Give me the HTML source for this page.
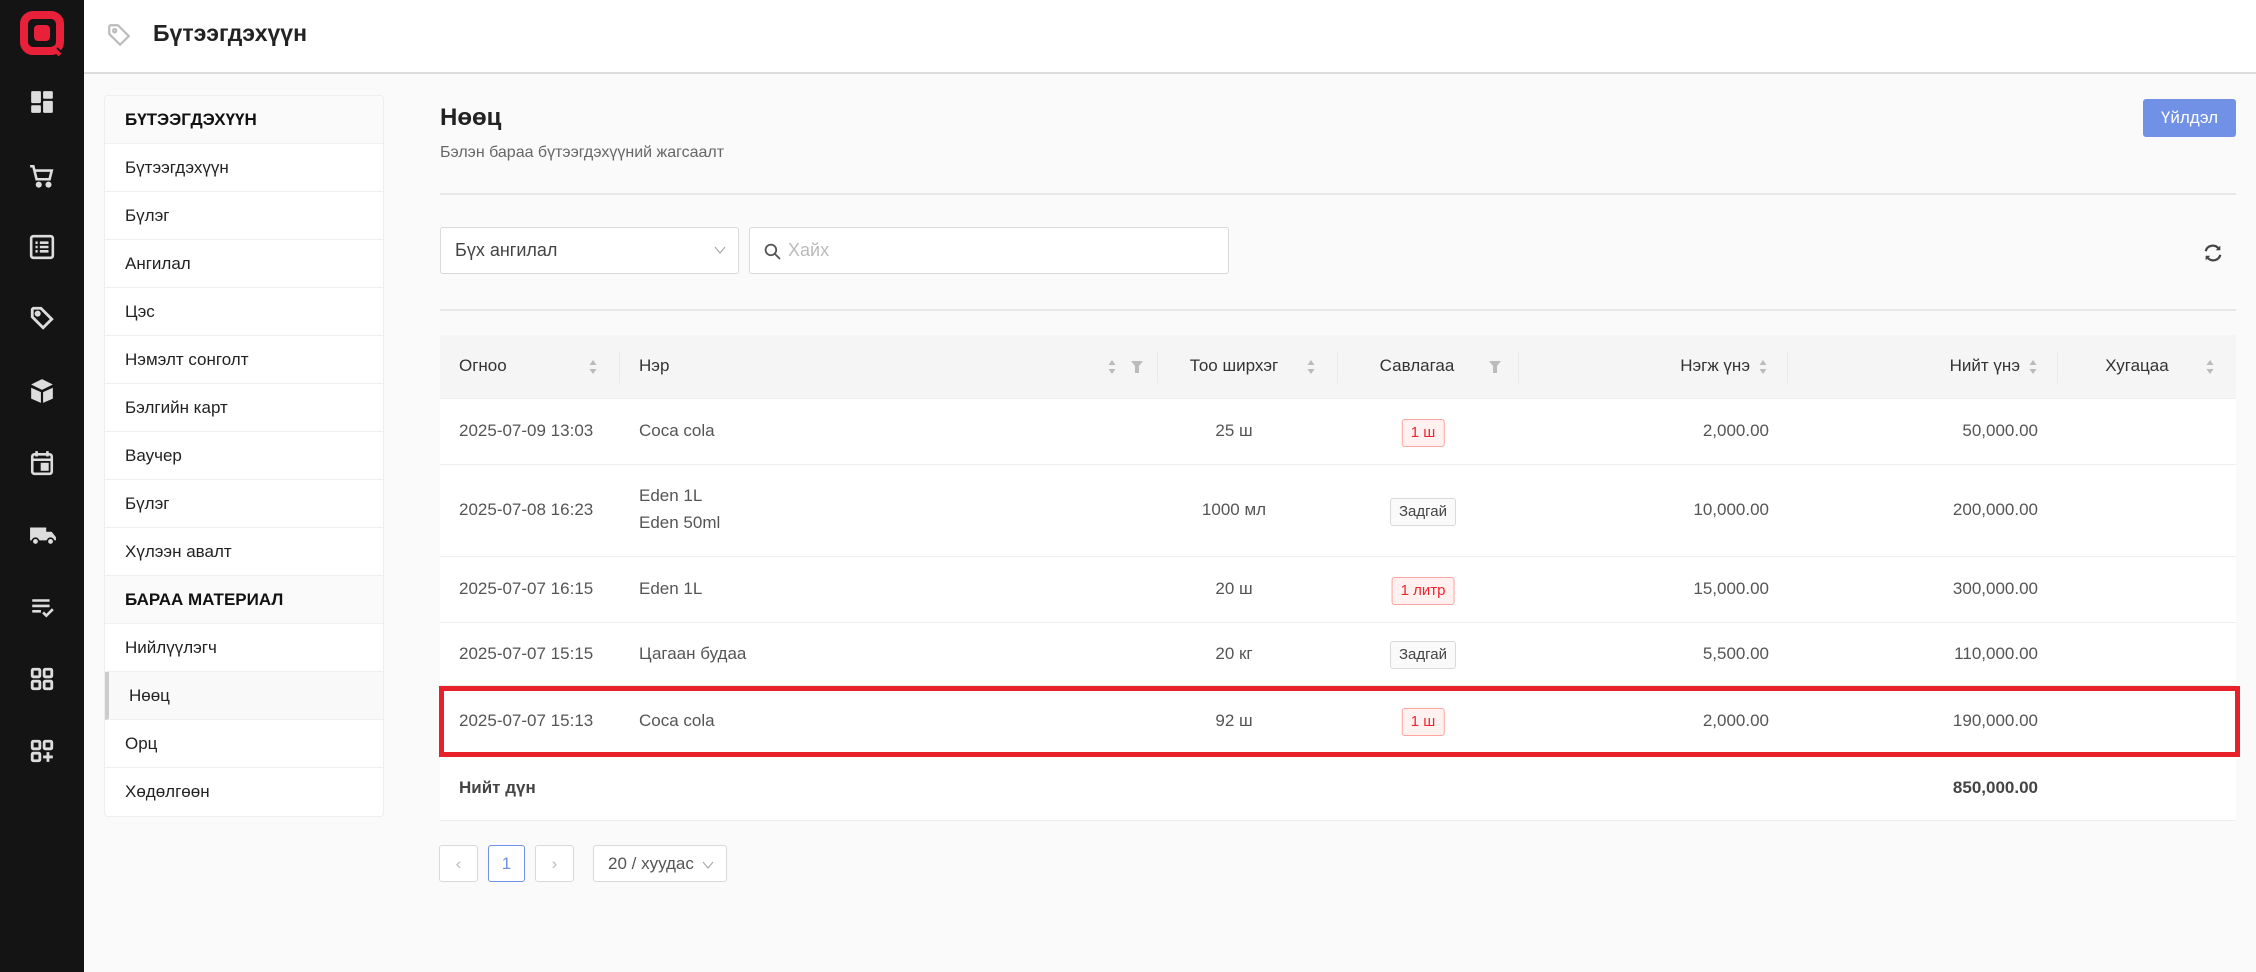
<!DOCTYPE html>
<html><head><meta charset="utf-8"><style>
*{box-sizing:border-box;margin:0;padding:0}
body{width:2256px;height:972px;overflow:hidden;background:#fafafa;font-family:"Liberation Sans",Arial,sans-serif;color:#333;position:relative}
.abs{position:absolute}
#side{left:0;top:0;width:84px;height:972px;background:#141414}
#side svg{position:absolute;left:29px}
#top{left:84px;top:0;width:2172px;height:74px;background:#fff;border-bottom:2px solid #ddd}
#menu{left:104px;top:95px;width:280px;background:#fff;border:1px solid #eee;border-radius:4px;overflow:hidden}
#menu div{height:48px;line-height:48px;padding-left:20px;font-size:17px;color:#222;border-bottom:1px solid #f0f0f0}
#menu div.h{background:#fafafa;font-weight:bold;color:#111}
#menu div.s{background:#f9f9f9;border-left:4px solid #ccc;padding-left:20px}
.tbl{left:440px;width:1796px}
.row{position:absolute;left:0;width:1796px;background:#fff;border-bottom:1.5px solid #eee}
.c{position:absolute;font-size:17px;color:#555;white-space:nowrap}
.tag{position:absolute;height:28px;line-height:26px;font-size:15px;padding:0 8px;border-radius:3px;transform:translateX(-50%)}
.red{background:#fff1f0;border:1px solid #ffa39e;color:#f5222d}
.gray{background:#fafafa;border:1px solid #d9d9d9;color:#444}
.hd{position:absolute;font-size:17px;color:#333}
.dv{position:absolute;top:16px;width:1px;height:32px;background:#eaeaea}
.sort{position:absolute;width:8px;height:16px}
.pb{position:absolute;top:845px;height:37px;border:1px solid #d9d9d9;border-radius:3px;background:#fff;font-size:17px;color:#bbb;text-align:center;line-height:35px}
</style></head><body>
<div id="side" class="abs">
<svg style="left:18px;top:9px" width="48" height="48" viewBox="0 0 48 48"><rect x="6" y="6" width="36" height="36" rx="9" fill="none" stroke="#e8203a" stroke-width="8"/><rect x="16" y="16" width="16" height="16" rx="4" fill="#e8203a"/><path d="M38 40l8 8" stroke="#141414" stroke-width="5"/><path d="M34 38l8 8" stroke="#e8203a" stroke-width="4"/></svg>
<svg style="top:89px" width="26" height="26" viewBox="0 0 24 24" fill="#ddd"><rect x="2" y="2" width="9" height="11" rx="1"/><rect x="13" y="2" width="9" height="7" rx="1"/><rect x="2" y="15" width="9" height="7" rx="1"/><rect x="13" y="11" width="9" height="11" rx="1"/></svg>
<svg style="top:163px" width="26" height="26" viewBox="0 0 24 24" fill="none" stroke="#ddd" stroke-width="2.4"><path d="M1 3h3l3 12h12l2-8H6"/><circle cx="9" cy="20" r="1.6" fill="#ddd"/><circle cx="18" cy="20" r="1.6" fill="#ddd"/></svg>
<svg style="top:234px" width="26" height="26" viewBox="0 0 24 24" fill="none" stroke="#ddd" stroke-width="2.4"><rect x="2" y="2" width="20" height="20" rx="2"/><path d="M6 8h2M10 8h8M6 12h2M10 12h8M6 16h2M10 16h8"/></svg>
<svg style="top:305px" width="26" height="26" viewBox="0 0 24 24" fill="none" stroke="#ddd" stroke-width="2.6"><path d="M3 4v7l10 10 8-8L11 3H4z"/><circle cx="8" cy="8" r="1.5"/></svg>
<svg style="top:378px" width="26" height="26" viewBox="0 0 24 24" fill="#ddd"><path d="M12 1l10 5-10 5L2 6z"/><path d="M2 9l9 4v10l-9-4zM13 13l9-4v10l-9 4z"/></svg>
<svg style="top:450px" width="26" height="26" viewBox="0 0 24 24" fill="none" stroke="#ddd" stroke-width="2.4"><rect x="3" y="4" width="18" height="18" rx="2"/><path d="M7 1v5M17 1v5M3 9h18"/><rect x="12" y="13" width="5" height="5" fill="#ddd"/></svg>
<svg style="top:522px" width="28" height="26" viewBox="0 0 26 24" fill="#ddd"><path d="M1 5h15v12H1zM16 9h5l4 5v3h-9z"/><circle cx="6" cy="18" r="3" fill="#ddd" stroke="#141414" stroke-width="1.5"/><circle cx="20" cy="18" r="3" fill="#ddd" stroke="#141414" stroke-width="1.5"/></svg>
<svg style="top:594px" width="26" height="26" viewBox="0 0 24 24" fill="none" stroke="#ddd" stroke-width="2.4"><path d="M3 6h16M3 11h16M3 16h8M13 17l3 3 6-6"/></svg>
<svg style="top:666px" width="26" height="26" viewBox="0 0 24 24" fill="none" stroke="#ddd" stroke-width="2.6"><rect x="3" y="3" width="7" height="7" rx="1"/><rect x="14" y="3" width="7" height="7" rx="1"/><rect x="3" y="14" width="7" height="7" rx="1"/><rect x="14" y="14" width="7" height="7" rx="1"/></svg>
<svg style="top:738px" width="26" height="26" viewBox="0 0 24 24" fill="none" stroke="#ddd" stroke-width="2.6"><rect x="3" y="3" width="7" height="7" rx="1"/><rect x="14" y="3" width="7" height="7" rx="1"/><rect x="3" y="14" width="7" height="7" rx="1"/><path d="M17.5 13v9M13 17.5h9"/></svg>
</div>
<div id="top" class="abs">
<svg class="abs" style="left:22px;top:22px" width="26" height="26" viewBox="0 0 24 24" fill="none" stroke="#bbb" stroke-width="2"><path d="M3 4v7l10 10 8-8L11 3H4z"/><circle cx="8" cy="8" r="1.5"/></svg>
<div class="abs" style="left:69px;top:20px;font-size:23px;font-weight:bold;color:#222">Бүтээгдэхүүн</div>
</div>
<div id="menu" class="abs">
<div class="h">БҮТЭЭГДЭХҮҮН</div><div>Бүтээгдэхүүн</div><div>Бүлэг</div><div>Ангилал</div><div>Цэс</div><div>Нэмэлт сонголт</div><div>Бэлгийн карт</div><div>Ваучер</div><div>Бүлэг</div><div>Хүлээн авалт</div>
<div class="h">БАРАА МАТЕРИАЛ</div><div>Нийлүүлэгч</div><div class="s">Нөөц</div><div>Орц</div><div style="border-bottom:none">Хөдөлгөөн</div>
</div>
<div class="abs" style="left:440px;top:104px;font-size:24px;font-weight:bold;color:#222">Нөөц</div>
<div class="abs" style="left:440px;top:144px;font-size:16px;color:#666">Бэлэн бараа бүтээгдэхүүний жагсаалт</div>
<div class="abs" style="left:2143px;top:99px;width:93px;height:38px;background:#7091e6;border-radius:3px;color:#fff;font-size:17px;text-align:center;line-height:38px">Үйлдэл</div>
<div class="abs" style="left:440px;top:193px;width:1796px;height:1.5px;background:#e8e8e8"></div>
<div class="abs" style="left:440px;top:227px;width:299px;height:47px;background:#fff;border:1px solid #d9d9d9;border-radius:3px;font-size:18px;color:#444;line-height:45px;padding-left:14px">Бүх ангилал<svg class="abs" style="right:12px;top:18px" width="12" height="8" viewBox="0 0 12 8" fill="none" stroke="#aaa" stroke-width="1.2"><path d="M1 1l5 6 5-6"/></svg></div>
<div class="abs" style="left:749px;top:227px;width:480px;height:47px;background:#fff;border:1px solid #d9d9d9;border-radius:3px;font-size:18px;color:#bbb;line-height:45px;padding-left:38px">Хайх<svg class="abs" style="left:14px;top:15px" width="17" height="17" viewBox="0 0 16 16" fill="none" stroke="#555" stroke-width="1.7"><circle cx="6.5" cy="6.5" r="5"/><path d="M10 10l5 5"/></svg></div>
<svg class="abs" style="left:2202px;top:242px" width="22" height="22" viewBox="0 0 24 24" fill="none" stroke="#444" stroke-width="2.4"><path d="M4 10a8 8 0 0 1 14-3M20 14a8 8 0 0 1-14 3"/><path d="M20 4v5h-5z" fill="#444" stroke="none"/><path d="M4 20v-5h5z" fill="#444" stroke="none"/></svg>
<div class="abs" style="left:440px;top:309px;width:1796px;height:1.5px;background:#e8e8e8"></div>

<div class="abs tbl" style="top:335px;height:64px;background:#f5f5f5;border-bottom:1.5px solid #eee">
<div class="hd" style="left:19px;top:21px">Огноо</div>
<div class="hd" style="left:199px;top:21px">Нэр</div>
<div class="hd" style="top:21px;width:120px;text-align:center;left:734px">Тоо ширхэг</div>
<div class="hd" style="left:937px;top:21px;width:80px;text-align:center">Савлагаа</div>
<div class="hd" style="right:486px;top:21px">Нэгж үнэ</div>
<div class="hd" style="right:216px;top:21px">Нийт үнэ</div>
<div class="hd" style="left:1657px;top:21px;width:80px;text-align:center">Хугацаа</div>
<div class="dv" style="left:179px"></div><div class="dv" style="left:717px"></div><div class="dv" style="left:897px"></div><div class="dv" style="left:1078px"></div><div class="dv" style="left:1347px"></div><div class="dv" style="left:1617px"></div>
<svg class="sort" style="left:149px;top:24px" viewBox="0 0 8 16" fill="#bbb"><path d="M4 1l3.5 5h-7zM4 15l3.5-5h-7z"/></svg>
<svg class="sort" style="left:668px;top:24px" viewBox="0 0 8 16" fill="#bbb"><path d="M4 1l3.5 5h-7zM4 15l3.5-5h-7z"/></svg>
<svg class="abs" style="left:691px;top:25px" width="12" height="14" viewBox="0 0 12 14" fill="#bbb"><path d="M0 1h12L8 6v7H4V6z"/></svg>
<svg class="sort" style="left:867px;top:24px" viewBox="0 0 8 16" fill="#bbb"><path d="M4 1l3.5 5h-7zM4 15l3.5-5h-7z"/></svg>
<svg class="abs" style="left:1049px;top:25px" width="12" height="14" viewBox="0 0 12 14" fill="#bbb"><path d="M0 1h12L8 6v7H4V6z"/></svg>
<svg class="sort" style="left:1319px;top:24px" viewBox="0 0 8 16" fill="#bbb"><path d="M4 1l3.5 5h-7zM4 15l3.5-5h-7z"/></svg>
<svg class="sort" style="left:1589px;top:24px" viewBox="0 0 8 16" fill="#bbb"><path d="M4 1l3.5 5h-7zM4 15l3.5-5h-7z"/></svg>
<svg class="sort" style="left:1766px;top:24px" viewBox="0 0 8 16" fill="#bbb"><path d="M4 1l3.5 5h-7zM4 15l3.5-5h-7z"/></svg>
</div>

<div class="abs tbl" style="top:399px;height:422px">
<div class="row" style="top:0;height:66px">
<div class="c" style="left:19px;top:22px">2025-07-09 13:03</div><div class="c" style="left:199px;top:22px">Coca cola</div>
<div class="c" style="left:734px;width:120px;text-align:center;top:22px">25 ш</div><div class="tag red" style="left:983px;top:20px">1 ш</div>
<div class="c" style="right:467px;top:22px">2,000.00</div><div class="c" style="right:198px;top:22px">50,000.00</div></div>
<div class="row" style="top:66px;height:92px">
<div class="c" style="left:19px;top:35px">2025-07-08 16:23</div><div class="c" style="left:199px;top:21px">Eden 1L</div><div class="c" style="left:199px;top:48px">Eden 50ml</div>
<div class="c" style="left:734px;width:120px;text-align:center;top:35px">1000 мл</div><div class="tag gray" style="left:983px;top:33px">Задгай</div>
<div class="c" style="right:467px;top:35px">10,000.00</div><div class="c" style="right:198px;top:35px">200,000.00</div></div>
<div class="row" style="top:158px;height:66px">
<div class="c" style="left:19px;top:22px">2025-07-07 16:15</div><div class="c" style="left:199px;top:22px">Eden 1L</div>
<div class="c" style="left:734px;width:120px;text-align:center;top:22px">20 ш</div><div class="tag red" style="left:983px;top:20px">1 литр</div>
<div class="c" style="right:467px;top:22px">15,000.00</div><div class="c" style="right:198px;top:22px">300,000.00</div></div>
<div class="row" style="top:224px;height:63px">
<div class="c" style="left:19px;top:21px">2025-07-07 15:15</div><div class="c" style="left:199px;top:21px">Цагаан будаа</div>
<div class="c" style="left:734px;width:120px;text-align:center;top:21px">20 кг</div><div class="tag gray" style="left:983px;top:18px">Задгай</div>
<div class="c" style="right:467px;top:21px">5,500.00</div><div class="c" style="right:198px;top:21px">110,000.00</div></div>
<div class="row" style="top:287px;height:70px">
<div class="c" style="left:19px;top:25px">2025-07-07 15:13</div><div class="c" style="left:199px;top:25px">Coca cola</div>
<div class="c" style="left:734px;width:120px;text-align:center;top:25px">92 ш</div><div class="tag red" style="left:983px;top:22px">1 ш</div>
<div class="c" style="right:467px;top:25px">2,000.00</div><div class="c" style="right:198px;top:25px">190,000.00</div></div>
<div class="row" style="top:357px;height:65px">
<div class="c" style="left:19px;top:22px;font-weight:bold;color:#444">Нийт дүн</div>
<div class="c" style="right:198px;top:22px;font-weight:bold;color:#444">850,000.00</div></div>
</div>
<div class="abs" style="left:439px;top:686px;width:1801px;height:71px;border:5px solid #e8202a"></div>

<div class="pb" style="left:439px;width:39px">‹</div>
<div class="pb" style="left:488px;width:37px;border-color:#7091e6;color:#7091e6">1</div>
<div class="pb" style="left:535px;width:39px">›</div>
<div class="pb" style="left:593px;width:134px;color:#555;text-align:left;padding-left:14px">20 / хуудас<svg class="abs" style="right:12px;top:15px" width="12" height="8" viewBox="0 0 12 8" fill="none" stroke="#aaa" stroke-width="1.2"><path d="M1 1l5 6 5-6"/></svg></div>
</body></html>
